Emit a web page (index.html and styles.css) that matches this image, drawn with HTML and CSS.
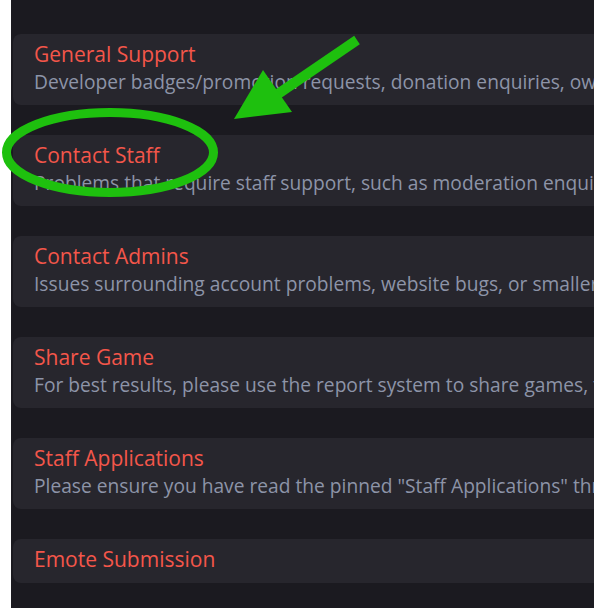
FILE: index.html
```html
<!DOCTYPE html>
<html>
<head>
<meta charset="utf-8">
<link rel="stylesheet" href="styles.css">
</head>
<body>
<div class="page">
  <div class="list">
    <div class="card">
      <div class="title">General Support</div>
      <div class="desc">Developer badges/promotion requests, donation enquiries, ownership transfers and general questions</div>
    </div>
    <div class="card">
      <div class="title">Contact Staff</div>
      <div class="desc">Problems that require staff support, such as moderation enquiries and reports</div>
    </div>
    <div class="card">
      <div class="title">Contact Admins</div>
      <div class="desc">Issues surrounding account problems, website bugs, or smaller issues</div>
    </div>
    <div class="card">
      <div class="title">Share Game</div>
      <div class="desc">For best results, please use the report system to share games, thank you</div>
    </div>
    <div class="card">
      <div class="title">Staff Applications</div>
      <div class="desc">Please ensure you have read the pinned "Staff Applications" thread first</div>
    </div>
    <div class="card short">
      <div class="title">Emote Submission</div>
    </div>
  </div>
  <svg class="annot" width="594" height="608" viewBox="0 0 594 608">
    <ellipse cx="110" cy="152.5" rx="103.5" ry="40" fill="none" stroke="#1ec00e" stroke-width="9"/>
    <line x1="357" y1="40" x2="272" y2="98" stroke="#1ec00e" stroke-width="10"/>
    <polygon points="234,119 263,70 292,112" fill="#1ec00e"/>
  </svg>
</div>
</body>
</html>
```
FILE: styles.css
```css
html, body {
  margin: 0;
  padding: 0;
  background: #ffffff;
}
.page {
  position: relative;
  width: 594px;
  height: 608px;
  overflow: hidden;
  background: #ffffff;
}
.list {
  margin-left: 11px;
  height: 608px;
  background: #1b1a20;
  padding: 34px 0 0 2px;
  box-sizing: border-box;
  display: flex;
  flex-direction: column;
  gap: 30px;
  font-family: "Open Sans", sans-serif;
}
.card {
  background: #27262d;
  border-radius: 8px 0 0 8px;
  padding: 6px 0 9px 21px;
  white-space: nowrap;
  overflow: hidden;
}
.card.short {
  padding-bottom: 10px;
}
.title {
  color: #f4564a;
  font-size: 21px;
  line-height: 28px;
}
.desc {
  color: #8d94a8;
  font-size: 19.2px;
  line-height: 28px;
}
.annot {
  position: absolute;
  left: 0;
  top: 0;
  pointer-events: none;
}
```
